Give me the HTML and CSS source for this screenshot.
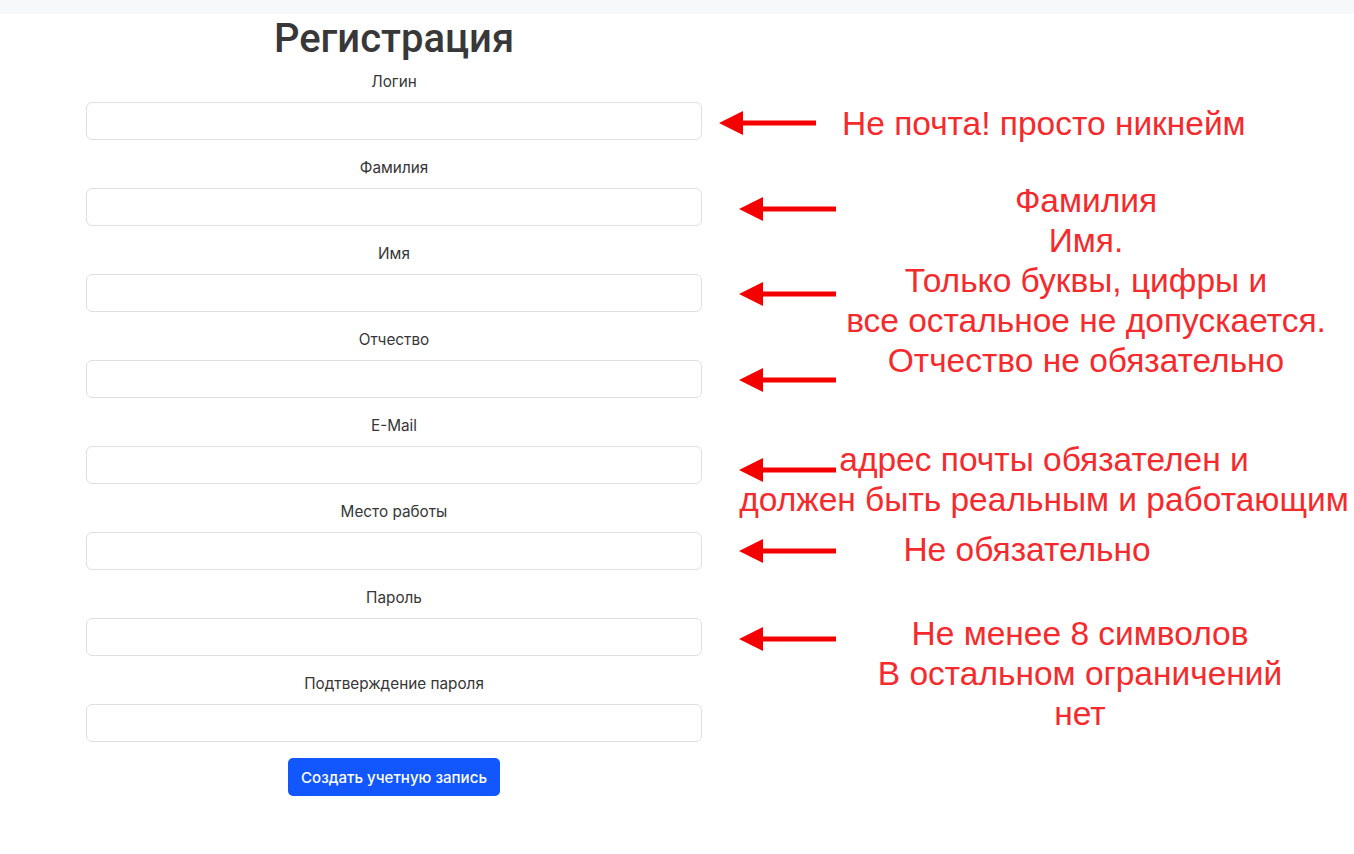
FILE: index.html
```html
<!DOCTYPE html>
<html lang="ru">
<head>
<meta charset="utf-8">
<title>Регистрация</title>
<link rel="stylesheet" href="styles.css">
</head>
<body>
<div class="topbar"></div>
<main class="page">
  <form class="reg">
    <h1 class="title">Регистрация</h1>
    <div class="field"><label class="lbl">Логин</label><input class="inp" type="text"></div>
    <div class="field"><label class="lbl">Фамилия</label><input class="inp" type="text"></div>
    <div class="field"><label class="lbl">Имя</label><input class="inp" type="text"></div>
    <div class="field"><label class="lbl">Отчество</label><input class="inp" type="text"></div>
    <div class="field"><label class="lbl">E-Mail</label><input class="inp" type="text"></div>
    <div class="field"><label class="lbl">Место работы</label><input class="inp" type="text"></div>
    <div class="field"><label class="lbl">Пароль</label><input class="inp" type="password"></div>
    <div class="field"><label class="lbl">Подтверждение пароля</label><input class="inp" type="password"></div>
    <div class="actions"><button class="btn" type="button">Создать учетную запись</button></div>
  </form>

  <div class="notes">
    <svg class="arrow a1" width="100" height="26" viewBox="0 0 100 26"><polygon points="1,13 25,1 25,25" /><rect x="24" y="10.5" width="74" height="5" /></svg>
    <svg class="arrow a2" width="100" height="26" viewBox="0 0 100 26"><polygon points="1,13 25,1 25,25" /><rect x="24" y="10.5" width="74" height="5" /></svg>
    <svg class="arrow a3" width="100" height="26" viewBox="0 0 100 26"><polygon points="1,13 25,1 25,25" /><rect x="24" y="10.5" width="74" height="5" /></svg>
    <svg class="arrow a4" width="100" height="26" viewBox="0 0 100 26"><polygon points="1,13 25,1 25,25" /><rect x="24" y="10.5" width="74" height="5" /></svg>
    <svg class="arrow a5" width="100" height="26" viewBox="0 0 100 26"><polygon points="1,13 25,1 25,25" /><rect x="24" y="10.5" width="74" height="5" /></svg>
    <svg class="arrow a6" width="100" height="26" viewBox="0 0 100 26"><polygon points="1,13 25,1 25,25" /><rect x="24" y="10.5" width="74" height="5" /></svg>
    <svg class="arrow a7" width="100" height="26" viewBox="0 0 100 26"><polygon points="1,13 25,1 25,25" /><rect x="24" y="10.5" width="74" height="5" /></svg>

    <div class="note n1">Не почта! просто никнейм</div>
    <div class="note n2">Фамилия<br>Имя.<br>Только буквы, цифры и<br>все остальное не допускается.<br>Отчество не обязательно</div>
    <div class="note n3">адрес почты обязателен и<br>должен быть реальным и работающим</div>
    <div class="note n4">Не обязательно</div>
    <div class="note n5">Не менее 8 символов<br>В остальном ограничений<br>нет</div>
  </div>
</main>
</body>
</html>
```

FILE: styles.css
```css
* { box-sizing: border-box; }
html, body { margin: 0; padding: 0; background: #fff; }
body {
  font-family: Inter, "Liberation Sans", Arial, sans-serif;
  color: #333;
  width: 1354px;
  height: 854px;
  overflow: hidden;
}
.topbar {
  height: 14px;
  background: #f7f8f9;
}
.page {
  position: relative;
}
.reg {
  width: 616px;
  margin-left: 86px;
  display: flex;
  flex-direction: column;
}
.title {
  margin: 2px 0 10px;
  font-family: Roboto, "Liberation Sans", Arial, sans-serif;
  font-size: 40px;
  line-height: 46px;
  font-weight: 500;
  color: #383838;
  text-align: center;
}
.field {
  display: flex;
  flex-direction: column;
  margin-bottom: 18px;
}
.lbl {
  display: block;
  text-align: center;
  font-size: 15.3px;
  line-height: 20px;
  margin-bottom: 10px;
  color: #363636;
}
.inp {
  display: block;
  width: 616px;
  height: 38px;
  border: 1px solid #dcdfe3;
  border-radius: 6px;
  background: #fff;
  margin: 0;
  padding: 6px 12px;
  font: inherit;
}
.actions {
  display: flex;
  justify-content: center;
  margin-top: -2px;
}
.btn {
  width: 212px;
  height: 38px;
  border: 0;
  border-radius: 5px;
  background: #1257fd;
  color: #fff;
  font-family: Inter, "Liberation Sans", Arial, sans-serif;
  font-size: 15.1px;
  font-weight: 500;
  padding: 0;
}
.notes {
  position: absolute;
  left: 0;
  top: -14px;
  width: 1354px;
  height: 854px;
  overflow: hidden;
  pointer-events: none;
}
.arrow {
  position: absolute;
  fill: #f50000;
}
.a1 { left: 718px; top: 110px; }
.a2 { left: 738px; top: 196px; }
.a3 { left: 738px; top: 281px; }
.a4 { left: 738px; top: 367px; }
.a5 { left: 738px; top: 457px; }
.a6 { left: 738px; top: 538px; }
.a7 { left: 738px; top: 626px; }
.note {
  position: absolute;
  font-family: "Liberation Sans", Arial, sans-serif;
  font-size: 33.5px;
  line-height: 40px;
  color: #f52a2d;
  text-align: center;
  white-space: nowrap;
}
.n1 { left: 842px; top: 104px; text-align: left; }
.n2 { left: 786px; top: 181px; width: 600px; }
.n3 { left: 738px; top: 440px; width: 612px; }
.n4 { left: 827px; top: 530px; width: 400px; }
.n5 { left: 830px; top: 614px; width: 500px; }
```
